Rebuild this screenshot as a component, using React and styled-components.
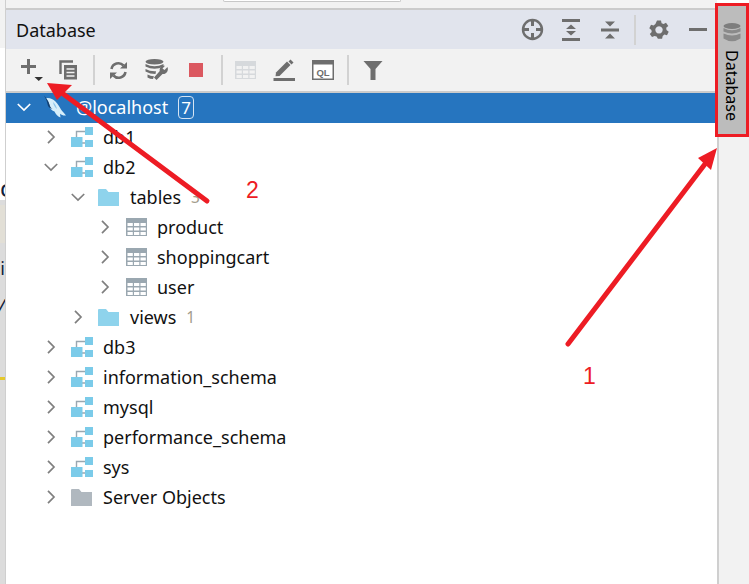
import React from "react";
import styled, { createGlobalStyle } from "styled-components";

const Global = createGlobalStyle`
  html, body { margin: 0; padding: 0; background: #fff; overflow: hidden; }
  * { box-sizing: border-box; }
`;
const FONT = `"Noto Sans", "Open Sans", "Liberation Sans", sans-serif`;

const Page = styled.div`
  position: relative; width: 749px; height: 584px; overflow: hidden;
  display: grid; grid-template-columns: 6px 711px 32px; font-family: ${FONT};
`;
const LeftEdge = styled.div`
  display: flex; flex-direction: column; border-right: 1px solid #cfcfcf; height: 100%;
`;
const EdgePart = styled.div`
  height: ${p => p.$h}px; background: ${p => p.$bg}; flex: ${p => (p.$grow ? 1 : "none")};
  overflow: hidden; font-size: ${p => p.$size || 18}px; line-height: ${p => p.$h}px; color: #10203a; white-space: nowrap;
  font-style: ${p => (p.$italic ? "italic" : "normal")};
  display: flex; justify-content: ${p => (p.$start ? "flex-start" : "flex-end")};
`;
const Main = styled.div`display: flex; flex-direction: column; min-width: 0;`;
const TopStrip = styled.div`
  height: 10px; background: #f2f2f2; border-bottom: 2px solid #cbcbcb; padding-left: 217px;
`;
const Search = styled.div`
  width: 178px; height: 2px; border: 1px solid #c8c8c8; border-top: none; border-radius: 0 0 3px 3px; background: #fff;
`;
const Header = styled.div`
  height: 39px; background: #e1e4ed; display: flex; align-items: center; padding: 0 10px; color: #111;
`;
const Title = styled.div`font-size: 18px; flex: 1;`;
const HeaderIcons = styled.div`display: flex; align-items: center; height: 100%;`;
const Toolbar = styled.div`
  height: 44px; background: #f2f2f2; border-bottom: 2px solid #cbcbcb; display: flex; align-items: center; padding-left: 14px;
`;
const Sep = styled.div`
  width: 2px; height: ${p => p.$h || 30}px; background: #d2d2d2; margin: 0 ${p => p.$r || 0}px 0 ${p => p.$l || 0}px; flex: none;
`;
const Slot = styled.span`
  display: inline-flex; width: ${p => p.$w}px; margin-left: ${p => p.$l || 0}px; flex: none; position: relative;
  svg { display: block; }
`;
const Dash = styled.span`
  display: block; width: 18px; height: 3px; margin-left: 20px; background: #6e6e6e; flex: none;
`;
const Tree = styled.div`display: flex; flex-direction: column; background: #fff; flex: 1;`;
const Row = styled.div`
  height: 30px; display: flex; align-items: center; flex: none;
  padding-left: ${p => 10 + p.$depth * 27}px; padding-bottom: 2px;
  background: ${p => (p.$selected ? "#2675bf" : "transparent")};
  color: ${p => (p.$selected ? "#fff" : "#111")};
  font-size: 18px; white-space: nowrap;
`;
const Chevron = styled.span`width: 16px; height: 16px; margin-right: 13px; flex: none; display: flex;`;
const NodeIcon = styled.span`width: 20px; margin-right: 11px; flex: none; display: flex; overflow: visible;`;
const Count = styled.span`color: #a39c8c; font-size: 15.5px; margin-left: 10px;`;
const Badge = styled.span`
  margin-left: 10px; height: 23px; width: 16px; border: 1.5px solid #d5e4f3; border-radius: 4px; color: #fff;
  display: inline-flex; align-items: center; justify-content: center; font-size: 17px; line-height: 1;
`;
const Rail = styled.div`background: #f2f2f2; border-left: 2px solid #cfcfcf; margin-top: 10px; height: 574px;`;
const RailButton = styled.div`
  position: absolute; left: 718px; top: 6px; width: 28px; height: 128px; background: #bcbcbc;
  display: flex; flex-direction: column; align-items: center; padding-top: 17px; gap: 8px;
`;
const RailLabel = styled.div`
  writing-mode: vertical-rl; font-size: 16px; color: #000; line-height: 1;
`;
const Callout = styled.div`
  position: absolute; left: 715px; top: 3px; width: 34px; height: 134px; border: 3px solid #ed1c24; pointer-events: none;
`;
const Arrows = styled.svg`position: absolute; left: 0; top: 0; pointer-events: none;`;
const Num = styled.div`
  position: absolute; left: ${p => p.$x}px; top: ${p => p.$y}px; color: #ed1c24; font-size: 23px; line-height: 1;
  font-family: "Liberation Sans", sans-serif;
`;

const G = "#6e6e6e";

const ChevronIcon = ({ open, color = "#7f7f7f" }) => (
  <svg width="16" height="16" viewBox="0 0 16 16" fill="none" stroke={color} strokeWidth="1.7">
    {open ? <path d="M1.8 5 L8 11 L14.2 5" /> : <path d="M5 1.8 L11 8 L5 14.2" />}
  </svg>
);
const DbIcon = () => (
  <svg width="22" height="20" viewBox="0 0 22 20" style={{ marginLeft: -1, flex: "none" }}>
    <path d="M5.5 10 V4.5 H14 M11 16 H14" fill="none" stroke="#9aa7b0" strokeWidth="1.4" />
    <rect x="0" y="10" width="11.5" height="10" fill="#7bcbe9" />
    <rect x="14" y="0" width="8" height="8" fill="#7bcbe9" />
    <rect x="14" y="13" width="8" height="7" fill="#7bcbe9" />
  </svg>
);
const FolderIcon = ({ color = "#8ed3ec" }) => (
  <svg width="21" height="17" viewBox="0 0 21 17" style={{ flex: "none", marginLeft: -1 }}>
    <path d="M0 1 Q0 0 1 0 H8 L10.5 3 H21 V17 H0 Z" fill={color} />
  </svg>
);
const TableIcon = ({ light }) => {
  const c = light ? "#d6d9dc" : "#9aa7b0";
  return (
    <svg width="21" height="18" viewBox="0 0 21 18" style={{ flex: "none" }}>
      <rect x="0" y="0" width="21" height="18" fill={c} />
      <g fill={light ? "#f2f2f2" : "#fff"}>
        {[5, 9.5, 14].map(y => [1.5, 8, 14.5].map(x => <rect key={`${x}-${y}`} x={x} y={y} width="5.3" height="3" />))}
      </g>
    </svg>
  );
};
const Dolphin = () => (
  <svg width="24" height="24" viewBox="0 0 24 24" style={{ flex: "none", marginLeft: -2 }}>
    <path d="M3 3 C7 2.5 10 4 12.5 6.5 C15 9 16.5 12 18 14.5 C19.5 16.5 21 18 23 20.5 C20.5 20.8 18.5 20 17 18.8 L17.5 22.5 C14.5 21.5 12.5 19 11.5 16.5 C9 15.5 7 14 6.5 11 C6 8 4.5 5.5 3 3 Z" fill="#d6eefa" />
    <path d="M1 0.5 C3.5 3 5.5 6 6.5 9.5 C7 11.5 8 13 9.5 14 C6.5 13.5 4.8 11.5 4.5 9 C4 6 2.5 3 1 0.5 Z" fill="#123f70" />
    <path d="M10 7 C12 9 13.5 11.5 14 14 C12 12.5 10.5 10 10 7 Z" fill="#8cc4ea" />
  </svg>
);

const Plus = () => (
  <Slot $w={24}>
    <svg width="24" height="24" viewBox="0 0 24 24">
      <path d="M8.5 1 V16 M1 8.5 H16" stroke={G} strokeWidth="3" />
      <path d="M14.5 19 H23 L18.75 23 Z" fill="#333" />
    </svg>
  </Slot>
);
const CopyIcon = () => (
  <svg width="19" height="20" viewBox="0 0 19 20">
    <path d="M14 1.5 H1.5 V14" fill="none" stroke={G} strokeWidth="2.4" />
    <rect x="5" y="5" width="13" height="14.5" fill={G} />
    <path d="M7.5 9 H15.5 M7.5 12.5 H15.5 M7.5 16 H15.5" stroke="#f2f2f2" strokeWidth="1.4" />
  </svg>
);
const RefreshIcon = () => (
  <svg width="19" height="19" viewBox="0 0 19 19" fill="none">
    <path d="M2.5 8 A7 7 0 0 1 14.5 4.5" stroke={G} strokeWidth="2.6" />
    <path d="M16.5 11 A7 7 0 0 1 4.5 14.5" stroke={G} strokeWidth="2.6" />
    <path d="M11 7.5 H18 V1 Z M8 11.5 H1 V18 Z" fill={G} />
  </svg>
);
const DbWrench = () => (
  <svg width="24" height="22" viewBox="0 0 24 22">
    <ellipse cx="9.5" cy="2.8" rx="9" ry="2.8" fill={G} />
    <path d="M0.5 5 Q9.5 9.5 18.5 5 V7.5 Q9.5 12 0.5 7.5 Z" fill={G} />
    <path d="M0.5 10 Q5 12.5 11 12.2 L10.5 15 Q5 15 0.5 12.5 Z" fill={G} />
    <path d="M2.5 15.5 Q6 17.5 9 17.3 L8 20 Q5 20 2.5 18.5 Z" fill={G} />
    <path d="M22.5 8 L19.5 11 L17.5 9.5 L20 6.8 C17 6 14 8.5 14.8 12 L9 18.5 L11.5 21 L17.5 15 C21 15.5 24 12 22.5 8 Z" fill={G} />
  </svg>
);
const PencilIcon = () => (
  <svg width="23" height="22" viewBox="0 0 23 22">
    <path d="M3 15.5 L14 4.5 L17.5 8 L6.5 19 L2.5 19.2 Z" fill={G} transform="translate(0 -2)" />
    <path d="M15.5 2.5 L17.5 0.5 L20.5 3.5 L18.5 5.5 Z" fill={G} />
    <rect x="0.5" y="19" width="21.5" height="3" fill={G} />
  </svg>
);
const QlIcon = () => (
  <svg width="22" height="20" viewBox="0 0 22 20">
    <rect x="0.75" y="0.75" width="20.5" height="18.5" fill="#fff" stroke={G} strokeWidth="1.5" />
    <rect x="0" y="0" width="22" height="4.5" fill={G} />
    <text x="11" y="15.5" textAnchor="middle" fontFamily="Liberation Sans, sans-serif" fontSize="9.5" fontWeight="700" fill={G}>QL</text>
  </svg>
);
const FilterIcon = () => (
  <svg width="20" height="19" viewBox="0 0 20 19">
    <path d="M0.5 0 H19.5 L12.5 8 V19 H7.5 V8 Z" fill={G} />
  </svg>
);
const Target = () => (
  <svg width="23" height="23" viewBox="0 0 23 23" fill="none" stroke={G} strokeWidth="2.4">
    <circle cx="11.5" cy="11.5" r="9.5" />
    <path d="M11.5 1.5 V8 M11.5 15 V21.5 M1.5 11.5 H8 M15 11.5 H21.5" strokeWidth="3" />
  </svg>
);
const Expand = () => (
  <svg width="18" height="22" viewBox="0 0 18 22">
    <rect width="18" height="3" fill={G} /><rect y="19" width="18" height="3" fill={G} />
    <path d="M9 5.5 L14 10 H4 Z M9 16.5 L14 12 H4 Z" fill={G} />
  </svg>
);
const Collapse = () => (
  <svg width="18" height="18" viewBox="0 0 18 18">
    <rect y="7.5" width="18" height="3" fill={G} />
    <path d="M4 0.5 H14 L9 5.5 Z M4 17.5 H14 L9 12.5 Z" fill={G} />
  </svg>
);
const Gear = () => (
  <svg width="20" height="20" viewBox="0 0 20 20">
    <path fillRule="evenodd" fill={G} d="M8 0.5 H12 L12.6 3.2 L14.6 4.1 L17 2.7 L19.3 5.9 L17.2 7.7 L17.5 9.9 L19.7 11.7 L18 15.2 L15.4 14.6 L13.7 16 L13.1 18.7 H8.9 L7.6 16.6 L5.5 15.9 L3 17 L0.8 13.9 L2.7 12 L2.4 10 L0.3 8.2 L2 4.8 L4.6 5.4 L6.4 4.1 Z M10 6.2 A3.7 3.7 0 1 0 10.01 6.2 Z" />
  </svg>
);
const RailDb = () => (
  <svg width="18" height="19" viewBox="0 0 18 19">
    <ellipse cx="9" cy="3" rx="8.5" ry="3" fill="#7d7d7d" />
    <path d="M0.5 5 Q9 9.5 17.5 5 V8.5 Q9 12.5 0.5 8.5 Z M0.5 10.5 Q9 14.5 17.5 10.5 V15.5 Q9 21 0.5 15.5 Z" fill="#8a8a8a" />
  </svg>
);

const rows = [
  { depth: 1, kind: "db", label: "db1" },
  { depth: 1, kind: "db", label: "db2", open: true },
  { depth: 2, kind: "folder", label: "tables", open: true, count: 3 },
  { depth: 3, kind: "table", label: "product" },
  { depth: 3, kind: "table", label: "shoppingcart" },
  { depth: 3, kind: "table", label: "user" },
  { depth: 2, kind: "folder", label: "views", count: 1 },
  { depth: 1, kind: "db", label: "db3" },
  { depth: 1, kind: "db", label: "information_schema" },
  { depth: 1, kind: "db", label: "mysql" },
  { depth: 1, kind: "db", label: "performance_schema" },
  { depth: 1, kind: "db", label: "sys" },
  { depth: 1, kind: "server", label: "Server Objects" },
];
const nodeIcons = {
  db: <DbIcon />,
  folder: <FolderIcon />,
  table: <TableIcon />,
  server: <FolderIcon color="#b0b8bf" />,
};

export default function App() {
  return (
    <Page>
      <Global />
      <LeftEdge>
        <EdgePart $h={48} $bg="#f2f2f2" />
        <EdgePart $h={128} $bg="#fff" />
        <EdgePart $h={24} $bg="#fff" $size={24} $start>c</EdgePart>
        <EdgePart $h={5} $bg="#dcdcdc" />
        <EdgePart $h={38} $bg="#e2dfd6" />
        <EdgePart $h={15} $bg="#dcdcdc" />
        <EdgePart $h={20} $bg="#dcdcdc">i</EdgePart>
        <EdgePart $h={20} $bg="#dcdcdc" />
        <EdgePart $h={15} $bg="#dcdcdc" $italic>/</EdgePart>
        <EdgePart $h={64} $bg="#dcdcdc" />
        <EdgePart $h={3} $bg="#e5c92e" />
        <EdgePart $grow $bg="#dcdcdc" />
      </LeftEdge>
      <Main>
        <TopStrip><Search /></TopStrip>
        <Header>
          <Title>Database</Title>
          <HeaderIcons>
            <Slot $w={23}><Target /></Slot>
            <Slot $w={18} $l={18}><Expand /></Slot>
            <Slot $w={18} $l={21}><Collapse /></Slot>
            <Sep $l={15} $h={30} />
            <Slot $w={20} $l={13}><Gear /></Slot>
            <Dash />
          </HeaderIcons>
        </Header>
        <Toolbar>
          <Plus />
          <Slot $w={19} $l={15}><CopyIcon /></Slot>
          <Sep $l={15} />
          <Slot $w={19} $l={14}><RefreshIcon /></Slot>
          <Slot $w={24} $l={17}><DbWrench /></Slot>
          <Slot $w={14} $l={20}><svg width="14" height="14"><rect width="14" height="14" fill="#db5860" /></svg></Slot>
          <Sep $l={18} />
          <Slot $w={21} $l={12}><TableIcon light /></Slot>
          <Slot $w={23} $l={17}><PencilIcon /></Slot>
          <Slot $w={22} $l={16}><QlIcon /></Slot>
          <Sep $l={13} />
          <Slot $w={20} $l={14}><FilterIcon /></Slot>
        </Toolbar>
        <Tree>
          <Row $depth={0} $selected>
            <Chevron><ChevronIcon open color="#fff" /></Chevron>
            <NodeIcon><Dolphin /></NodeIcon>
            @localhost
            <Badge>7</Badge>
          </Row>
          {rows.map(r => (
            <Row key={r.label} $depth={r.depth}>
              <Chevron><ChevronIcon open={r.open} /></Chevron>
              <NodeIcon>{nodeIcons[r.kind]}</NodeIcon>
              {r.label}
              {r.count != null && <Count>{r.count}</Count>}
            </Row>
          ))}
        </Tree>
      </Main>
      <Rail />
      <RailButton>
        <RailDb />
        <RailLabel>Database</RailLabel>
      </RailButton>
      <Callout />
      <Arrows width="749" height="584" viewBox="0 0 749 584">
        <g fill="#ed1c24" stroke="#ed1c24" strokeLinecap="round">
          <path d="M568 344 L705 164" strokeWidth="5" fill="none" />
          <path d="M717 148 L698 158 L711 170 Z" stroke="none" />
          <path d="M207 201 L62 93" strokeWidth="5" fill="none" />
          <path d="M47 83 L72 85 L57 100 Z" stroke="none" />
        </g>
      </Arrows>
      <Num $x={246} $y={179}>2</Num>
      <Num $x={583} $y={365}>1</Num>
    </Page>
  );
}
